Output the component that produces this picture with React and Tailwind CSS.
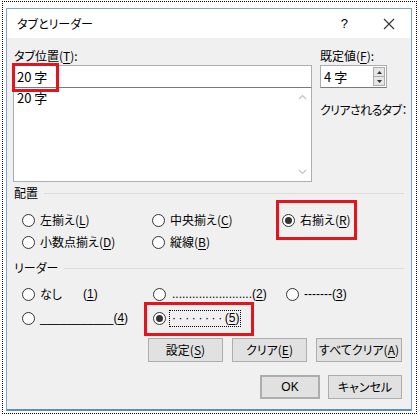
import React from 'react';

const jp = { fontFamily: '"Noto Sans CJK JP", "Noto Sans", sans-serif' };
const lat = { fontFamily: '"Liberation Sans", "Noto Sans CJK JP", sans-serif' };

const Radio = ({ checked }) => (
  <span className="w-[13px] h-[13px] shrink-0 rounded-full border border-[#333333] bg-white flex items-center justify-center">
    {checked && <span className="w-[7px] h-[7px] rounded-full bg-[#333333]" />}
  </span>
);

const Key = ({ k }) => (
  <>(<span className="underline underline-offset-2">{k}</span>)</>
);

const RedBox = ({ className }) => (
  <div className={`absolute border-[3px] border-[#e3141b] pointer-events-none ${className}`} />
);

const SectionLabel = ({ children, className }) => (
  <div className={`flex items-center h-[18px] ${className}`}>
    <span className="pl-[1px] leading-[18px]">{children}</span>
    <div className="flex-1 h-px bg-[#dcdcdc] ml-[6px] mr-[1px]" />
  </div>
);

const Btn = ({ children, className }) => (
  <button className={`h-[24px] bg-[#e1e1e1] border border-[#adadad] text-[12px] leading-none whitespace-nowrap flex items-center justify-center ${className}`}>
    {children}
  </button>
);

export default function App() {
  return (
    <div className="w-[420px] h-[419px] bg-white pt-[1px] pl-[2px] text-[12px] text-black [font-feature-settings:'palt']" style={jp}>
      <div className="w-[415px] h-[413px] border border-dotted border-black pt-[6px] pl-[3px]">
        {/* Dialog */}
        <div className="w-[406px] h-[403px] border border-[#7ea7d0] border-b-2 border-b-[#5b8dbf] bg-[#f0f0f0] flex flex-col">
          {/* Title bar */}
          <div className="h-[29px] bg-white flex items-center shrink-0">
            <span className="pl-[10px] leading-none">タブとリーダー</span>
            <span className="ml-auto mr-[35px] text-[13px] leading-none" style={lat}>?</span>
            <svg width="12" height="12" viewBox="0 0 12 12" className="mr-[16px]">
              <path d="M1 1 L11 11 M11 1 L1 11" stroke="#333" strokeWidth="1.1" fill="none" />
            </svg>
          </div>

          {/* Body */}
          <div className="px-[6px] flex flex-col">
            {/* Top */}
            <div className="flex gap-[8px]">
              <div className="w-[299px] flex flex-col">
                <div className="mt-[8px] h-[19px] leading-[19px] pl-[1px]">タブ位置<Key k="T" />:</div>
                <div className="relative h-[23px] bg-white border border-[#abadb3] border-b-[#7a7a7a] flex items-center pl-[3px] text-[13px]">
                  20 字
                  <RedBox className="-left-[2px] -top-[3px] w-[47px] h-[29px]" />
                </div>
                <div className="h-[94px] bg-white border border-t-0 border-[#abadb3] flex">
                  <div className="flex-1 pl-[3px] pt-[2px] text-[13px] leading-[16px]">20 字</div>
                  <div className="w-[17px] flex flex-col items-center justify-between py-[6px]">
                    <svg width="9" height="6" viewBox="0 0 9 6"><path d="M1 5 L4.5 1.5 L8 5" stroke="#c4c4c4" strokeWidth="1.2" fill="none" /></svg>
                    <svg width="9" height="6" viewBox="0 0 9 6"><path d="M1 1 L4.5 4.5 L8 1" stroke="#c4c4c4" strokeWidth="1.2" fill="none" /></svg>
                  </div>
                </div>
              </div>
              <div className="w-[67px] flex flex-col">
                <div className="mt-[8px] h-[19px] leading-[19px]">既定値<Key k="F" />:</div>
                <div className="h-[23px] bg-white border border-[#abadb3] border-b-[#7a7a7a] flex items-center">
                  <span className="pl-[3px] text-[13px] flex-1">4 字</span>
                  <div className="w-[12px] h-[19px] mr-[1px] flex flex-col border border-[#adadad]">
                    <div className="flex-1 bg-[#e6e6e6] border-b border-[#adadad] flex items-center justify-center">
                      <svg width="5" height="3" viewBox="0 0 5 3"><path d="M0 3 L2.5 0 L5 3 Z" fill="#333" /></svg>
                    </div>
                    <div className="flex-1 bg-[#e6e6e6] flex items-center justify-center">
                      <svg width="5" height="3" viewBox="0 0 5 3"><path d="M0 0 L2.5 3 L5 0 Z" fill="#333" /></svg>
                    </div>
                  </div>
                </div>
                <div className="mt-[13px] h-[18px] leading-[18px] whitespace-nowrap tracking-[-0.6px]">クリアされるタブ：</div>
              </div>
            </div>

            {/* 配置 */}
            <SectionLabel className="mt-[2px]">配置</SectionLabel>
            <div className="mt-[7px] pl-[9px] flex flex-col">
              <div className="h-[22px] flex">
                <div className="w-[130px] flex items-center gap-[5px]"><Radio /><span>左揃え<Key k="L" /></span></div>
                <div className="w-[130px] flex items-center gap-[5px]"><Radio /><span>中央揃え<Key k="C" /></span></div>
                <div className="relative w-[100px] flex items-center gap-[5px]">
                  <Radio checked /><span>右揃え<Key k="R" /></span>
                  <RedBox className="-left-[6px] -top-[9px] w-[81px] h-[40px]" />
                </div>
              </div>
              <div className="h-[22px] flex">
                <div className="w-[130px] flex items-center gap-[5px]"><Radio /><span>小数点揃え<Key k="D" /></span></div>
                <div className="w-[130px] flex items-center gap-[5px]"><Radio /><span>縦線<Key k="B" /></span></div>
              </div>
            </div>

            {/* リーダー */}
            <SectionLabel className="mt-[6px]">リーダー</SectionLabel>
            <div className="mt-[5px] pl-[9px] flex flex-col">
              <div className="h-[24px] flex">
                <div className="w-[131px] flex items-center gap-[5px]">
                  <Radio /><span>なし</span><span className="ml-[16px]" style={lat}><Key k="1" /></span>
                </div>
                <div className="w-[133px] flex items-center gap-[5px]">
                  <Radio /><span className="ml-[1px]" style={lat}>........................<Key k="2" /></span>
                </div>
                <div className="flex items-center gap-[5px]">
                  <Radio /><span style={lat}>-------<Key k="3" /></span>
                </div>
              </div>
              <div className="h-[24px] flex">
                <div className="w-[131px] flex items-center gap-[5px]">
                  <Radio /><span style={lat}>___________<Key k="4" /></span>
                </div>
                <div className="relative w-[133px] flex items-center gap-[3px]">
                  <Radio checked />
                  <span className="border border-dotted border-black pl-[2px] pr-[1px] leading-[15px]" style={lat}>
                    <span className="tracking-[2.6px]">········</span><Key k="5" />
                  </span>
                  <RedBox className="-left-[9px] -top-[4px] w-[110px] h-[34px]" />
                </div>
              </div>
            </div>

            {/* Buttons */}
            <div className="mt-[8px] flex justify-end gap-[9px] mr-[3px]">
              <Btn className="w-[75px]"><span>設定<Key k="S" /></span></Btn>
              <Btn className="w-[75px]"><span>クリア<Key k="E" /></span></Btn>
              <Btn className="w-[86px]"><span>すべてクリア<Key k="A" /></span></Btn>
            </div>
            <div className="mt-[13px] flex justify-end gap-[8px] mr-[3px]">
              <Btn className="w-[60px] border-2 border-[#0078d7]"><span style={lat}>OK</span></Btn>
              <Btn className="w-[74px]">キャンセル</Btn>
            </div>
          </div>
        </div>
      </div>
    </div>
  );
}
